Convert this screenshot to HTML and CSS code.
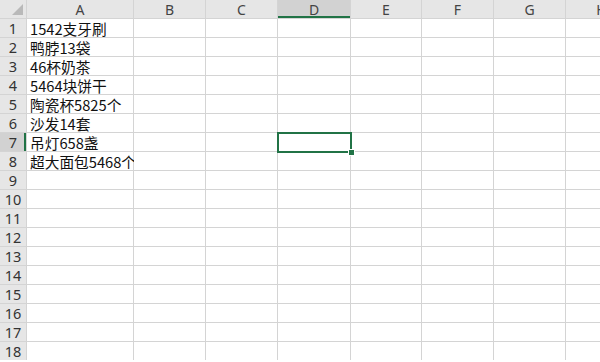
FILE: index.html
```html
<!DOCTYPE html>
<html lang="zh-CN">
<head>
    <meta charset="UTF-8">
    <title>Sheet1</title>
    <link rel="stylesheet" href="styles.css">
</head>
<body>

<!-- 工作表网格 -->
<div class="sheet" id="sheet"></div>

<script>
    const cols = ["A", "B", "C", "D", "E", "F", "G", "H"];
    const data = ["1542支牙刷", "鸭脖13袋", "46杯奶茶", "5464块饼干", "陶瓷杯5825个", "沙发14套", "吊灯658盏", "超大面包5468个"];
    const activeCol = 3; // D
    const activeRow = 7;
    const sheet = document.getElementById("sheet");

    function cell(cls, text) {
        const div = document.createElement("div");
        div.className = cls;
        if (text) div.textContent = text;
        sheet.appendChild(div);
        return div;
    }

    // 列标题
    const corner = cell("corner");
    corner.appendChild(document.createElement("span")).className = "corner-tri";
    cols.forEach((c, i) => {
        cell(i === activeCol ? "col-head active" : "col-head", c);
    });

    // 数据行
    for (let r = 1; r <= 18; r++) {
        cell(r === activeRow ? "row-head active" : "row-head", String(r));
        cols.forEach((c, i) => {
            const td = cell("cell", i === 0 ? data[r - 1] : "");
            if (r === activeRow && i === activeCol) {
                const sel = document.createElement("span");
                sel.className = "selection";
                td.appendChild(sel);
            }
        });
    }
</script>

</body>
</html>
```
FILE: styles.css
```css
body {
    margin: 0;
    overflow: hidden;
    background: #fff;
    font-family: "Noto Sans CJK SC", "Microsoft YaHei", sans-serif;
}
/* 网格：用 1px 间隙当表格线 */
.sheet {
    display: grid;
    grid-template-columns: 26px 106px 71px 71px 72px 70px 71px 71px 71px;
    grid-auto-rows: 18px;
    gap: 1px;
    background: #d4d4d4;
    width: 640px;
}
.corner,
.col-head,
.row-head {
    background: #e6e6e6;
    color: #444;
    font-family: "Noto Sans", sans-serif;
    font-size: 14px;
    line-height: 19px;
    text-align: center;
}
.corner {
    position: relative;
}
.corner-tri {
    position: absolute;
    right: 3px;
    bottom: 3px;
    width: 0;
    height: 0;
    border-left: 11px solid transparent;
    border-bottom: 11px solid #b9b9b9;
}
.row-head {
    color: #333;
    font-size: 14.5px;
}
.col-head.active {
    background: #d2d2d2;
    box-shadow: inset 0 -2px 0 #217346;
}
.row-head.active {
    background: #d2d2d2;
    box-shadow: inset -2px 0 0 #217346;
}
.cell {
    background: #fff;
    color: #111;
    font-size: 14.7px;
    line-height: 19px;
    padding-left: 3px;
    white-space: nowrap;
    position: relative;
}
/* 选中单元格 */
.selection {
    position: absolute;
    z-index: 2;
    left: -1px;
    top: -1px;
    right: -2px;
    bottom: -2px;
    border: 2px solid #217346;
}
.selection::after {
    content: "";
    position: absolute;
    right: -5px;
    bottom: -5px;
    width: 5px;
    height: 5px;
    background: #217346;
    border: 1px solid #fff;
}
```
